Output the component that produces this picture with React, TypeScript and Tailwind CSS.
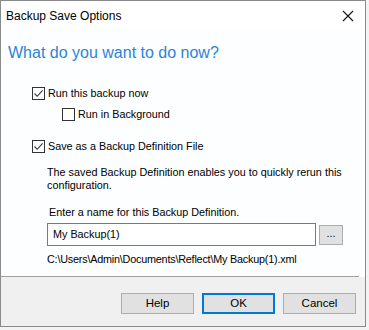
import React from "react";

function Check({ checked }: { checked: boolean }) {
  return (
    <span className="w-[13px] h-[13px] border border-[#333] bg-white flex items-center justify-center shrink-0">
      {checked && (
        <svg width="11" height="11" viewBox="0 0 11 11">
          <path d="M1.5 5.5 L4.2 8.3 L9.6 2.3" fill="none" stroke="#333" strokeWidth="1.1" />
        </svg>
      )}
    </span>
  );
}

export default function App() {
  const font = { fontFamily: '"Liberation Sans", Arial, sans-serif' };
  return (
    <div className="w-[369px] h-[330px] bg-[#f3f3f3] relative overflow-hidden text-[10.8px] text-black" style={font}>
      <div className="w-[366px] h-[327px] border border-[#8a8a8a] bg-white flex flex-col">
        <div className="h-[29px] flex items-center justify-between pl-[5px] pr-[11px] shrink-0">
          <span className="text-[12px] leading-none">Backup Save Options</span>
          <svg width="12" height="12" viewBox="0 0 12 12">
            <path d="M1 1 L11 11 M11 1 L1 11" stroke="#111" strokeWidth="1.1" />
          </svg>
        </div>
        <div className="flex-1 bg-[#fdfeff] flex flex-col whitespace-nowrap">
          <div className="pl-[7px] pt-[13px] text-[16px] leading-[20px] text-[#2c84d8]">What do you want to do now?</div>
          <div className="pl-[31px] pt-[22px] h-[38px] flex items-center gap-[3px] leading-[16px] box-border">
            <Check checked /> <span>Run this backup now</span>
          </div>
          <div className="pl-[61px] pt-[5px] flex items-center gap-[3px] leading-[16px]">
            <Check checked={false} /> <span>Run in Background</span>
          </div>
          <div className="pl-[31px] pt-[16px] flex items-center gap-[3px] leading-[16px]">
            <Check checked /> <span>Save as a Backup Definition File</span>
          </div>
          <div className="pl-[46px] pt-[12px] leading-[13px]">
            The saved Backup Definition enables you to quickly rerun this
            <br />
            configuration.
          </div>
          <div className="pl-[48px] pt-[13px] leading-[14px]">Enter a name for this Backup Definition.</div>
          <div className="pl-[46px] pt-[4px] flex items-center gap-[3px]">
            <div className="w-[269px] h-[23px] border border-[#7a7a7a] bg-white flex items-center pl-[5px]">My Backup(1)</div>
            <div className="w-[24px] h-[20px] border border-[#adadad] bg-[#e1e1e1] flex items-center justify-center leading-none pb-[2px]">...</div>
          </div>
          <div className="pl-[46px] pt-[6px] leading-[14px] tracking-[-0.2px]">C:\Users\Admin\Documents\Reflect\My Backup(1).xml</div>
          <div className="flex-1" />
        </div>
        <div className="h-[1px] bg-[#a0a0a0] mr-[6px]" />
        <div className="h-[49px] bg-[#f0f0f0] flex justify-end items-start pt-[16px] pr-[9px] gap-[8px] shrink-0 text-[11.5px]">
          <div className="w-[73px] h-[21px] border border-[#adadad] bg-[#e1e1e1] flex items-center justify-center">Help</div>
          <div className="w-[73px] h-[21px] border-2 border-[#0078d7] bg-[#e1e1e1] flex items-center justify-center">OK</div>
          <div className="w-[73px] h-[21px] border border-[#adadad] bg-[#e1e1e1] flex items-center justify-center">Cancel</div>
        </div>
      </div>
    </div>
  );
}
